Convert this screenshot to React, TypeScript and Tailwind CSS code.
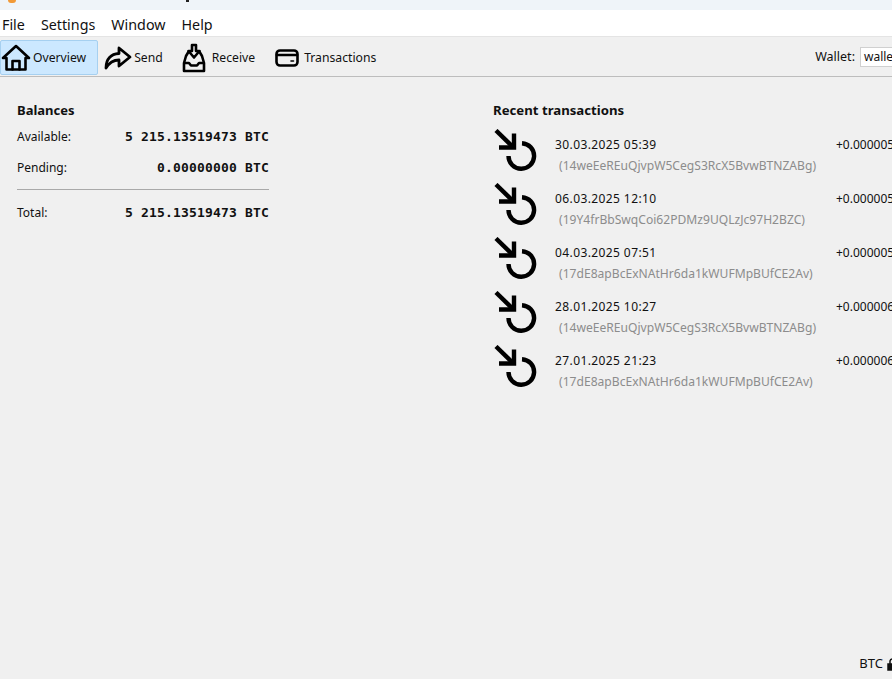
import { ReactNode } from "react";

const sans = "font-['Noto_Sans','Liberation_Sans',sans-serif]";

const transactions = [
  { date: "30.03.2025 05:39", address: "(14weEeREuQjvpW5CegS3RcX5BvwBTNZABg)", amount: "+0.00000512 BTC" },
  { date: "06.03.2025 12:10", address: "(19Y4frBbSwqCoi62PDMz9UQLzJc97H2BZC)", amount: "+0.00000546 BTC" },
  { date: "04.03.2025 07:51", address: "(17dE8apBcExNAtHr6da1kWUFMpBUfCE2Av)", amount: "+0.00000546 BTC" },
  { date: "28.01.2025 10:27", address: "(14weEeREuQjvpW5CegS3RcX5BvwBTNZABg)", amount: "+0.00000600 BTC" },
  { date: "27.01.2025 21:23", address: "(17dE8apBcExNAtHr6da1kWUFMpBUfCE2Av)", amount: "+0.00000600 BTC" },
];

function HomeIcon() {
  return (
    <svg width="30" height="28" viewBox="0 0 30 28" fill="none" stroke="#000" strokeWidth="2.6" strokeLinejoin="round" strokeLinecap="round">
      <path d="M2 14 L15 2 L28 14 L24.5 14 L24.5 25.5 L5.5 25.5 L5.5 14 Z" />
      <path d="M11.5 25.5 V17 H18.5 V25.5" />
    </svg>
  );
}

function SendIcon() {
  return (
    <svg width="28" height="24" viewBox="0 0 28 24" fill="none" stroke="#000" strokeWidth="2.8" strokeLinejoin="round">
      <path d="M2 22 C2 13 7 8 15 7.5 L15 2 L26 11 L15 20 L15 14 C9 14 5 17 2 22 Z" />
    </svg>
  );
}

function ReceiveIcon() {
  return (
    <svg width="24" height="30" viewBox="0 0 24 30" fill="none" stroke="#000" strokeWidth="2.6" strokeLinejoin="round">
      <path d="M7 8 L4 13 L2 20 V28 H22 V20 L20 13 L17 8" />
      <path d="M2 20 H7 L9 22.5 H15 L17 20 H22" />
      <path d="M10 2 H14 V8 H17.5 L12 14.5 L6.5 8 H10 Z" />
    </svg>
  );
}

function CardIcon() {
  return (
    <svg width="24" height="18" viewBox="0 0 24 18" fill="none" stroke="#000" strokeWidth="2.6" strokeLinecap="round">
      <rect x="1.5" y="1.5" width="21" height="15" rx="3.5" />
      <path d="M2 6 H22" />
      <path d="M16 12 H18.5" strokeWidth="1.6" />
    </svg>
  );
}

function TxIcon() {
  return (
    <svg width="44" height="42" viewBox="0 0 44 42" fill="none" stroke="#000" strokeWidth="4.4" className="shrink-0">
      <path d="M3 1.5 L20 18" />
      <path d="M21 4.5 V18.5 H6" />
      <path d="M15.5 27 A 12.8 12.8 0 1 0 29 14.2" />
    </svg>
  );
}

function ToolButton({ icon, label, active, className }: { icon: ReactNode; label: string; active?: boolean; className: string }) {
  return (
    <div
      className={`flex h-[35px] items-center rounded-[2px] border pt-[2px] ${
        active ? "border-[#a6d0f0] bg-[#cce8ff] pr-[11px]" : "border-transparent px-[3px]"
      } ${className}`}
    >
      {icon}
      <span className="text-[12.2px] text-[#111]">{label}</span>
    </div>
  );
}

function BalanceRow({ label, value }: { label: string; value: string }) {
  return (
    <div className="flex h-[18px] items-center justify-between">
      <span className="text-[12px] leading-[18px] text-[#111]">{label}</span>
      <span className="font-['DejaVu_Sans_Mono','Liberation_Mono',monospace] text-[13px] font-bold leading-[18px] tracking-[0.17px] text-[#111]">
        {value}
      </span>
    </div>
  );
}

export default function App() {
  return (
    <div className={`${sans} flex h-[679px] w-[892px] flex-col overflow-hidden bg-[#f0f0f0]`}>
      {/* Title bar, cut off at the top */}
      <div className="flex h-[10px] items-start gap-[170px] bg-[#eff4f9] pl-[8px]">
        <div className="h-[3px] w-[8px] rounded-b-full bg-[#f29a38]" />
        <div className="h-[2px] w-[3px] bg-[#222]" />
      </div>

      {/* Menu */}
      <div className="flex h-[27px] items-center gap-[16px] border-b border-[#e4e4e4] bg-white pl-[2px] pt-[3px]">
        {["File", "Settings", "Window", "Help"].map((item) => (
          <span key={item} className="text-[14.3px] text-[#111]">
            {item}
          </span>
        ))}
      </div>

      {/* Toolbar */}
      <div className="flex h-[40px] shrink-0 items-center border-b border-[#bdbdbd] pt-[1px]">
        <div className="flex items-center gap-[2px]">
          <ToolButton active icon={<HomeIcon />} label="Overview" className="gap-[2px]" />
          <ToolButton icon={<SendIcon />} label="Send" className="gap-[2px]" />
          <div className="w-[7px]" />
          <ToolButton icon={<ReceiveIcon />} label="Receive" className="gap-[6px]" />
          <div className="w-[8px]" />
          <ToolButton icon={<CardIcon />} label="Transactions" className="gap-[5px]" />
        </div>
        <div className="ml-auto flex shrink-0 items-center gap-[5px] pl-[2px]">
          <span className="text-[12.5px] text-[#111]">Wallet:</span>
          <div className="flex h-[20px] w-[32px] items-center overflow-hidden border border-r-0 border-[#d0d0d0] bg-white pl-[3px] text-[12px] text-[#111]">
            wallet.dat
          </div>
        </div>
      </div>

      {/* Overview */}
      <div className="flex min-h-0 flex-1 pl-[17px] pt-[23px]">
        <div className="w-[252px] shrink-0">
          <h2 className="text-[13px] font-bold leading-[20px] text-[#111]">Balances</h2>
          <div className="mt-[8px] flex flex-col gap-[13px]">
            <BalanceRow label="Available:" value="5 215.13519473 BTC" />
            <BalanceRow label="Pending:" value="0.00000000 BTC" />
          </div>
          <div className="mb-[14px] mt-[12px] h-px bg-[#a9a9a9]" />
          <BalanceRow label="Total:" value="5 215.13519473 BTC" />
        </div>

        <div className="ml-[224px] w-[500px] shrink-0">
          <h2 className="text-[13.2px] font-bold leading-[20px] text-[#111]">Recent transactions</h2>
          <div className="mt-[9px] flex flex-col gap-[12px]">
            {transactions.map((tx) => (
              <div key={tx.date} className="flex h-[42px] items-start">
                <TxIcon />
                <div className="ml-[18px] w-[281px] shrink-0 pt-[7px]">
                  <div className="text-[12px] leading-[18px] tracking-[0.4px] text-[#111]">{tx.date}</div>
                  <div className="ml-[4px] mt-[3px] whitespace-nowrap text-[12.1px] leading-[18px] text-[#8c8c8c]">
                    {tx.address}
                  </div>
                </div>
                <div className="whitespace-nowrap pt-[7px] text-[12px] leading-[18px] text-[#111]">{tx.amount}</div>
              </div>
            ))}
          </div>
        </div>
      </div>

      {/* Status bar */}
      <div className="flex h-[28px] shrink-0 items-center justify-end gap-[4px] pb-[2px]">
        <span className="text-[13px] text-[#111]">BTC</span>
        <svg width="5" height="13" viewBox="0 0 5 13" fill="none" stroke="#111" strokeWidth="1.5" className="shrink-0">
          <path d="M3 6 V3 A 3 2.5 0 0 1 6 1" />
          <rect x="1" y="6" width="8" height="6" fill="#111" />
        </svg>
      </div>
    </div>
  );
}
